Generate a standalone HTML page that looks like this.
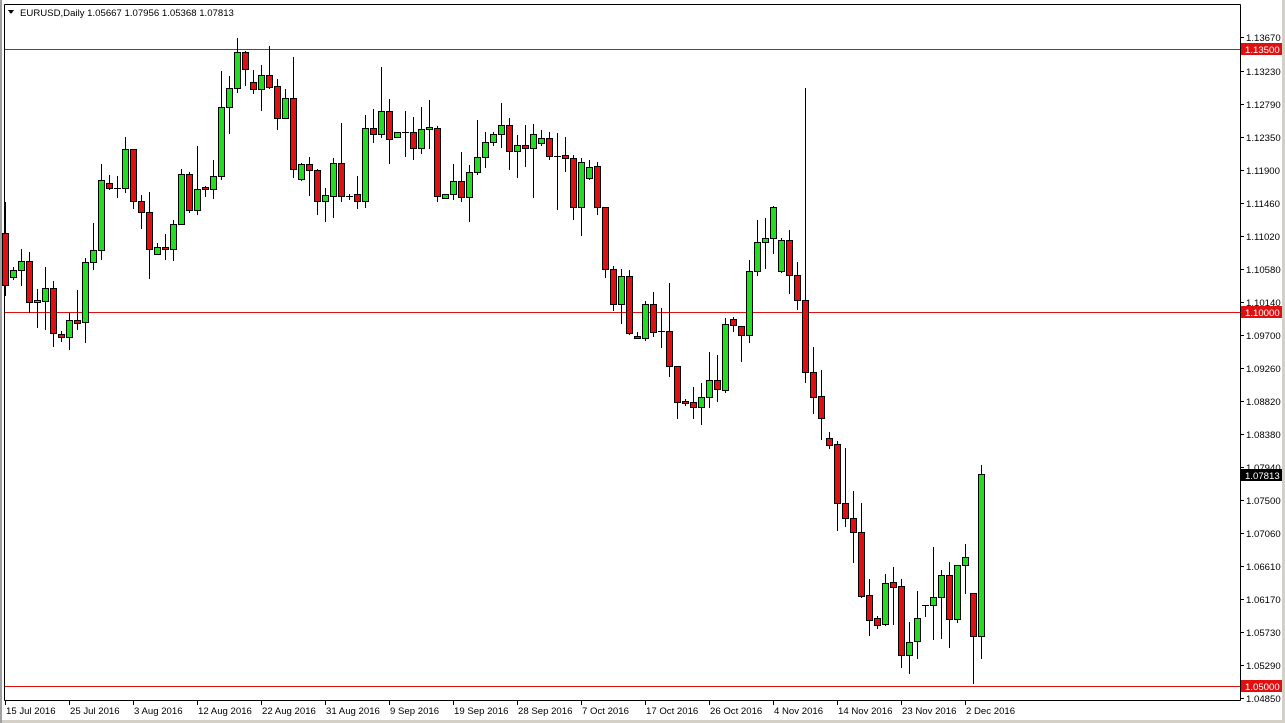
<!DOCTYPE html>
<html><head><meta charset="utf-8"><style>
html,body{margin:0;padding:0;background:#fff;width:1285px;height:723px;overflow:hidden}
svg{display:block;font-family:"Liberation Sans",Tahoma,sans-serif}
</style></head><body>
<svg id="s" width="1285" height="723" xmlns="http://www.w3.org/2000/svg" shape-rendering="crispEdges">
<rect x="0" y="0" width="1285" height="723" fill="#fff"/>
<rect x="1282" y="0" width="3" height="723" fill="#d4d0c8"/>
<rect x="0" y="720" width="1285" height="3" fill="#d4d0c8"/>
<rect x="0" y="0" width="2" height="723" fill="#a0a0a0"/>
<line x1="4.5" y1="4.5" x2="1240.5" y2="4.5" stroke="#000"/>
<line x1="4.5" y1="4.5" x2="4.5" y2="700.5" stroke="#000"/>
<line x1="1240.5" y1="4.5" x2="1240.5" y2="700.5" stroke="#000"/>
<line x1="4.5" y1="700.5" x2="1240.5" y2="700.5" stroke="#000"/>
<rect x="5" y="49" width="1235" height="1" fill="#dd1010"/>
<rect x="5" y="312" width="1235" height="1" fill="#dd1010"/>
<rect x="5" y="686" width="1235" height="1" fill="#dd1010"/>
<g id="c"></g>
<polygon points="8,10 14,10 11,14" fill="#000"/>
<text x="20" y="16" font-size="9.6" fill="#000">EURUSD,Daily  1.05667 1.07956 1.05368 1.07813</text>
<g id="ax" font-size="9.6" fill="#000"></g>
</svg>
<script>
var D=[
[5,202,233,285,295,'r'],[13,267,270,277,279,'g'],[21,249,261,270,285,'g'],[29,252,261,302,312,'r'],[37,289,300,302,327,'g'],[45,267,288,301,329,'g'],[53,281,288,333,346,'r'],[61,331,334,337,341,'r'],[69,313,320,337,349,'g'],[77,290,320,323,329,'r'],[85,258,262,322,342,'g'],[93,223,250,262,269,'g'],[101,164,180,250,259,'g'],[109,175,183,188,189,'r'],[117,176,188,188,197,'d'],[125,137,149,188,192,'g'],[133,149,149,201,208,'r'],[141,195,201,212,228,'r'],[149,192,212,249,278,'r'],[157,243,247,254,254,'g'],[165,234,247,249,259,'r'],[173,220,224,249,260,'g'],[181,169,174,224,224,'g'],[189,172,174,210,212,'r'],[197,146,189,210,214,'g'],[205,186,187,189,196,'r'],[213,160,176,189,198,'g'],[221,71,107,176,179,'g'],[229,76,88,107,133,'g'],[237,38,52,88,92,'g'],[245,51,52,69,85,'r'],
[253,70,82,89,93,'r'],[261,65,75,89,110,'g'],[269,46,75,87,88,'r'],[277,79,86,118,129,'r'],[285,89,98,118,118,'g'],[293,57,98,169,177,'r'],[301,163,164,179,180,'g'],[309,157,164,170,195,'r'],[317,169,170,201,214,'r'],[325,188,195,201,221,'g'],[333,158,163,196,217,'g'],[341,123,163,196,201,'r'],[349,194,196,196,199,'d'],[357,176,194,201,208,'r'],[365,115,128,201,207,'g'],[373,109,128,134,142,'r'],[381,67,111,134,137,'g'],[389,99,111,139,163,'r'],[397,132,132,137,137,'g'],[405,111,132,132,156,'d'],[413,117,132,148,159,'r'],[421,107,129,148,153,'g'],[429,100,127,129,148,'g'],[437,126,128,196,201,'r'],[445,194,194,198,198,'g'],[453,164,181,194,199,'g'],[461,152,181,197,201,'r'],[469,165,172,197,221,'g'],[477,120,157,172,174,'g'],[485,132,142,157,167,'g'],
[493,132,134,142,145,'g'],[501,103,125,134,147,'g'],[509,118,125,151,169,'r'],[517,135,145,151,177,'g'],[525,125,145,148,166,'r'],[533,124,134,148,197,'g'],[541,130,138,143,145,'g'],[549,132,138,156,159,'r'],[557,133,156,156,209,'d'],[565,137,155,158,171,'r'],[573,155,158,207,219,'r'],[581,158,162,207,235,'g'],[589,160,167,178,179,'g'],[597,162,166,207,214,'r'],[605,207,207,269,277,'r'],[613,266,269,304,310,'r'],[621,269,276,304,323,'g'],[629,270,276,333,334,'r'],[637,332,336,338,338,'r'],[645,301,304,338,340,'g'],[653,292,304,332,336,'r'],[661,308,331,331,347,'d'],[669,283,331,366,376,'r'],[677,366,366,402,418,'r'],[685,399,401,403,405,'r'],[693,387,402,407,418,'r'],[701,383,397,407,424,'g'],[709,352,380,397,407,'g'],[717,355,380,389,401,'r'],
[725,318,324,390,392,'g'],[733,317,319,325,331,'r'],[741,326,326,335,361,'r'],[749,260,271,335,342,'g'],[757,220,242,271,275,'g'],[765,218,238,242,268,'g'],[773,206,207,238,253,'g'],[781,238,240,271,272,'g'],[789,230,240,275,293,'r'],[797,262,275,300,309,'r'],[805,88,300,372,382,'r'],[813,347,372,397,413,'r'],[821,370,396,418,439,'r'],[829,432,438,445,448,'r'],[837,441,444,503,530,'r'],[845,448,503,518,526,'r'],[853,491,518,532,562,'r'],[861,503,532,596,597,'r'],[869,579,595,620,635,'r'],[877,616,618,625,628,'r'],[885,574,583,624,625,'g'],[893,567,582,587,624,'r'],[901,579,586,655,667,'r'],[909,622,642,655,673,'g'],[917,591,618,641,658,'g'],[925,605,605,605,616,'d'],[933,547,597,605,639,'g'],[941,570,575,597,638,'g'],[949,562,575,619,647,'r'],[957,565,565,619,622,'g'],[965,544,557,565,593,'g'],[973,593,593,636,683,'r'],[981,465,474,636,658,'g']];
var NS='http://www.w3.org/2000/svg',g=document.getElementById('c');
function el(t,a,p){var e=document.createElementNS(NS,t);for(var k in a)e.setAttribute(k,a[k]);(p||g).appendChild(e);return e;}
D.forEach(function(d){var x=d[0];
el('line',{x1:x+.5,y1:d[1],x2:x+.5,y2:d[4]+1,stroke:'#000'});
if(d[5]=='d'||d[3]-d[2]<1){el('line',{x1:x-3,y1:d[2]+.5,x2:x+4,y2:d[2]+.5,stroke:'#000'});}
else el('rect',{x:x-2.5,y:d[2]+.5,width:6,height:d[3]-d[2],fill:d[5]=='g'?'#22dd22':'#dd1111',stroke:'#000'});
});
var ax=document.getElementById('ax');
var P=[['1.13670',37],['1.13230',71],['1.12790',104],['1.12350',137],['1.11900',170],['1.11460',203],['1.11020',236],['1.10580',269],['1.10140',302],['1.09700',335],['1.09260',368],['1.08820',401],['1.08380',434],['1.07940',467],['1.07500',500],['1.07060',533],['1.06610',566],['1.06170',599],['1.05730',632],['1.05290',665],['1.04850',698]];
P.forEach(function(p){el('line',{x1:1241,y1:p[1]+.5,x2:1244,y2:p[1]+.5,stroke:'#000'},ax);var t=el('text',{x:1246,y:p[1]+4},ax);t.textContent=p[0];});
[['1.13500',49,'#e01010'],['1.10000',312,'#e01010'],['1.05000',686,'#e01010'],['1.07813',475,'#000']].forEach(function(p){
el('rect',{x:1241,y:p[1]-6,width:41,height:12,fill:p[2]},ax);var t=el('text',{x:1245,y:p[1]+4,fill:'#fff'},ax);t.textContent=p[0];});
var L=['15 Jul 2016','25 Jul 2016','3 Aug 2016','12 Aug 2016','22 Aug 2016','31 Aug 2016','9 Sep 2016','19 Sep 2016','28 Sep 2016','7 Oct 2016','17 Oct 2016','26 Oct 2016','4 Nov 2016','14 Nov 2016','23 Nov 2016','2 Dec 2016'];
L.forEach(function(s,i){var x=5+64*i;el('line',{x1:x+.5,y1:701,x2:x+.5,y2:705,stroke:'#000'},ax);var t=el('text',{x:x+1,y:714},ax);t.textContent=s;});
</script>
</body></html>
